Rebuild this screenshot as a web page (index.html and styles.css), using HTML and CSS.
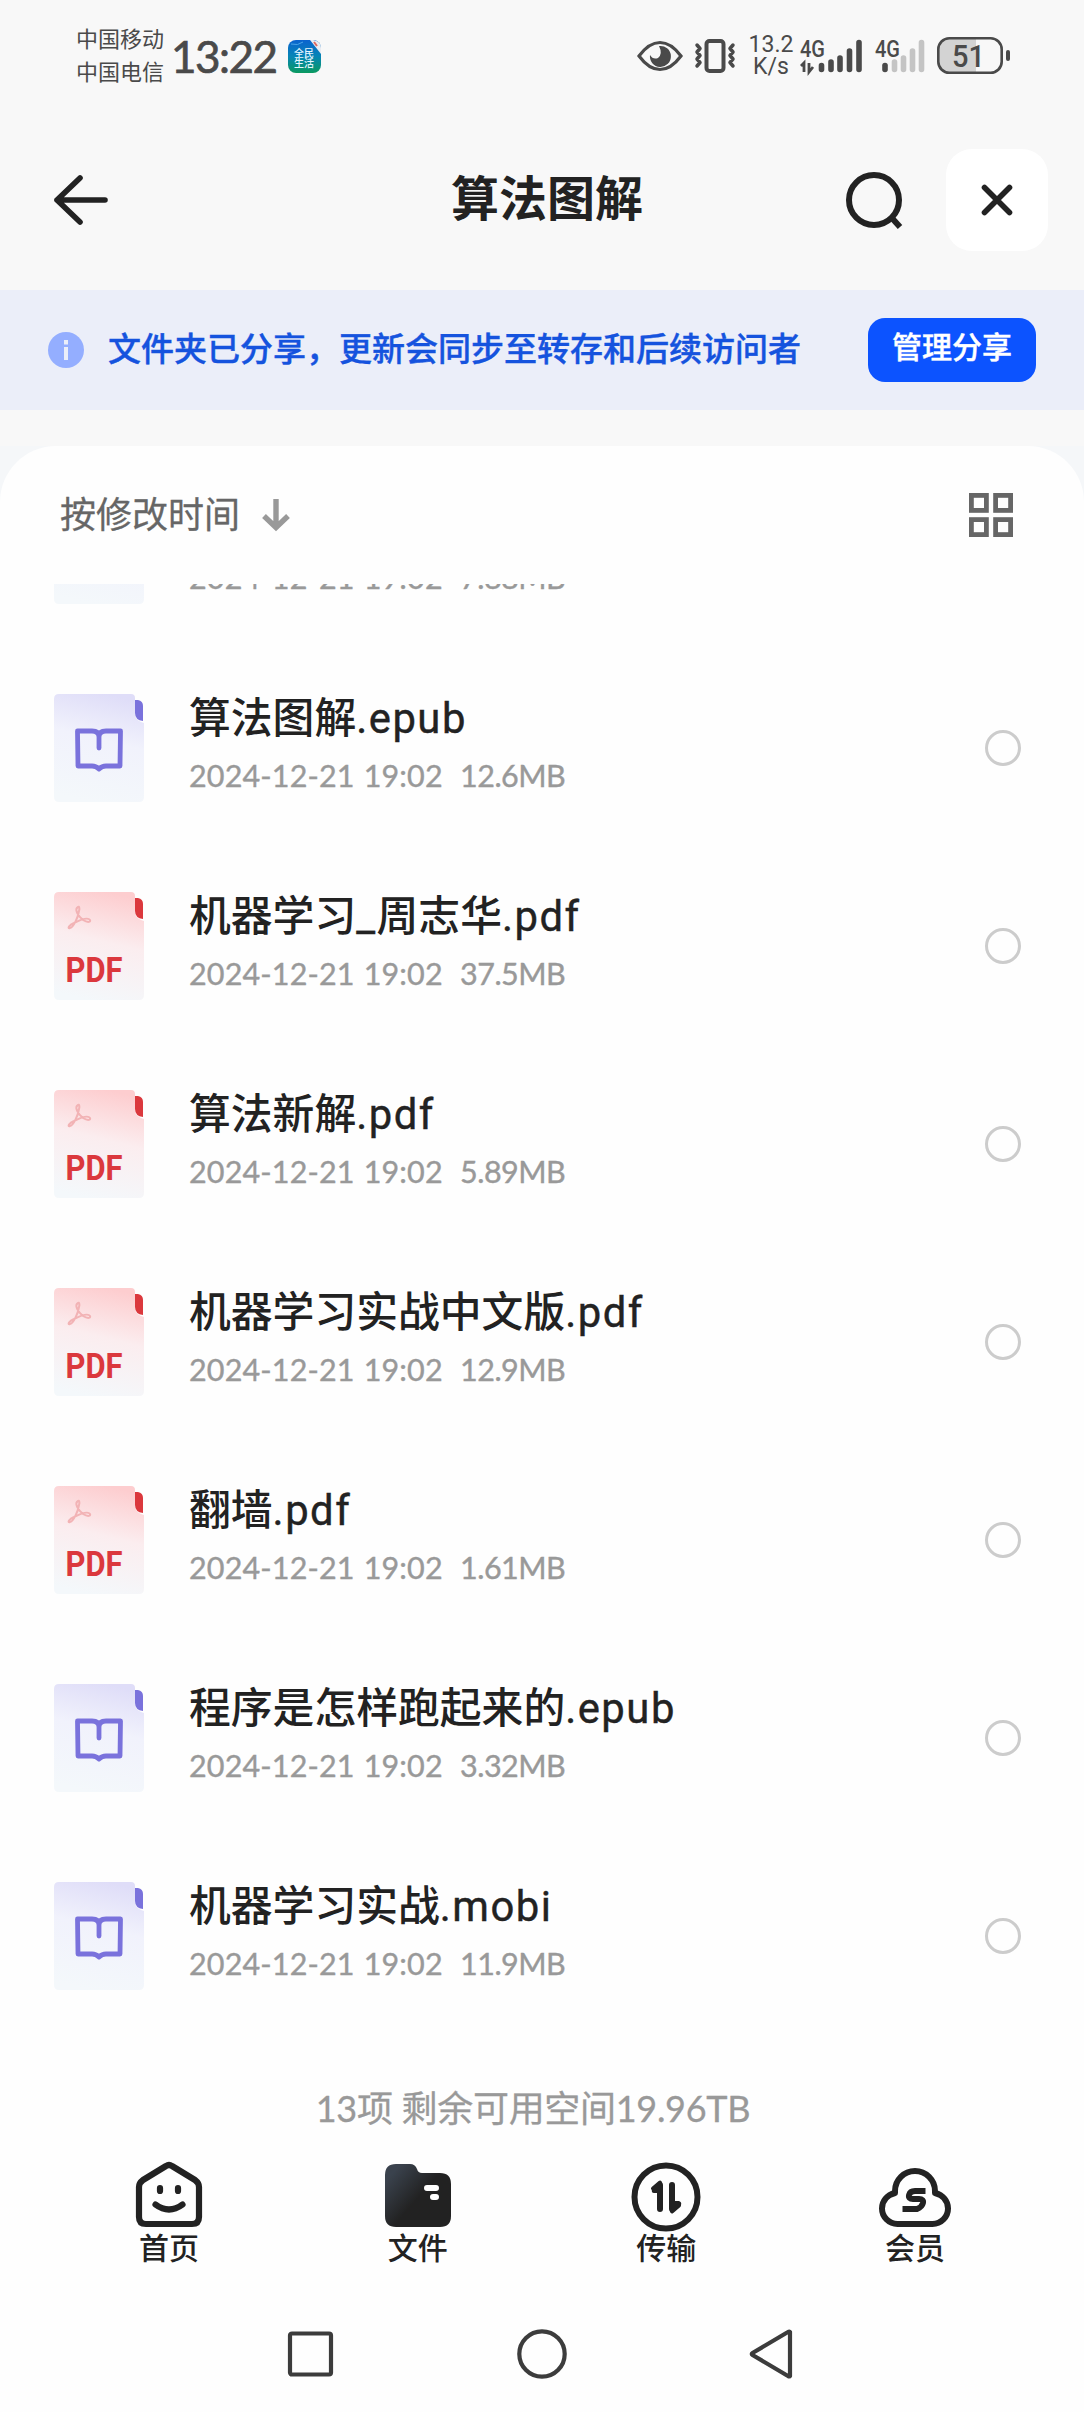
FILE: index.html
```
<!DOCTYPE html>
<html lang="zh-CN">
<head>
<meta charset="utf-8">
<title>算法图解</title>
<link rel="stylesheet" href="styles.css">
</head>
<body>
<svg class="defs" width="0" height="0">
  <defs>
    <linearGradient id="lilac" x1="0.6" y1="0" x2="0.4" y2="1"><stop offset="0" stop-color="#dfddf8"/><stop offset="0.42" stop-color="#f1f2fc"/><stop offset="1" stop-color="#f4f8fb"/></linearGradient>
    <linearGradient id="rose" x1="0.6" y1="0" x2="0.4" y2="1"><stop offset="0" stop-color="#fdcdcf"/><stop offset="0.45" stop-color="#fbedef"/><stop offset="1" stop-color="#f4f8fb"/></linearGradient>
    <linearGradient id="ink" x1="0" y1="0.1" x2="0.6" y2="0.6"><stop offset="0.15" stop-color="#3a424d"/><stop offset="0.85" stop-color="#222"/></linearGradient>
    <linearGradient id="app" x1="0" y1="0" x2="0" y2="1"><stop offset="0" stop-color="#0a63cf"/><stop offset="0.5" stop-color="#0785b5"/><stop offset="1" stop-color="#0b9a60"/></linearGradient>
    <symbol id="epub" viewBox="0 0 90 108">
      <path d="M5 0h72q4 0 4 4v17q1 6 9 8v74q0 5-5 5H5q-5 0-5-5V5q0-5 5-5z" fill="url(#lilac)"/>
      <path d="M81 6h3q5 1 5 6v15q-8-1-8-8z" fill="#7a72dc"/>
      <path d="M45 54V43q0-6-7-6H23.500l.5 35h14q4 0 7 3 3-3 7-3h14l.5-35H52q-7 0-7 6z" fill="none" stroke="#7a72dc" stroke-width="4.800" stroke-linejoin="round"/>
    </symbol>
    <symbol id="pdf" viewBox="0 0 90 108">
      <path d="M5 0h72q4 0 4 4v17q1 6 9 8v74q0 5-5 5H5q-5 0-5-5V5q0-5 5-5z" fill="url(#rose)"/>
      <path d="M81 6h3q5 1 5 6v15q-8-1-8-8z" fill="#db383d"/>
      <path d="M24 15c-4 2 0 9 5 13 5 3 8 2 7 0-2-3-10 0-16 3-5 2-7 6-4 5 3 0 8-10 9-17 1-3 0-5-1-4z" fill="none" stroke="#f2b3b5" stroke-width="2"/>
      <text x="11.500" y="90" class="pdf-word" textLength="57" lengthAdjust="spacingAndGlyphs">PDF</text>
    </symbol>
  </defs>
</svg>

<header class="status">
  <div class="carriers"><span>中国移动</span><span>中国电信</span></div>
  <div class="clock">13:22</div>
  <svg class="app-icon" width="33" height="33" viewBox="0 0 33 33"><rect width="33" height="33" rx="8" fill="url(#app)"/><path d="M22 0h3q8 1 8 8v6z" fill="#e9edf3"/><path d="M26 2l3 4" stroke="#dd6a62" stroke-width="2"/><path d="M3 4q7 2 12-2" stroke="#4aa5e8" fill="none"/><text x="6" y="17" class="app-word">全民</text><text x="6" y="27" class="app-word">生活</text></svg>
  <div class="indicators">
    <svg class="eye" width="46" height="32" viewBox="0 0 46 32"><path d="M2 16Q12 2.500 23 2.500T44 16Q34 29.500 23 29.500T2 16z" fill="none" stroke="#4a4a4a" stroke-width="3.200"/><path d="M22 6a10.500 10.500 0 1 1-9 9q3 5 8 3 5-4 1-12z" fill="#4a4a4a"/></svg>
    <svg class="vibrate" width="42" height="34" viewBox="0 0 42 34" fill="none" stroke="#4a4a4a"><rect x="12.500" y="2" width="17" height="30" rx="3" stroke-width="4"/><path d="M3 6l3 3.500L3 13l3 3.500L3 20l3 3.500L3 27M39 6l-3 3.500 3 3.500-3 3.500 3 3.500-3 3.500 3 3.500" stroke-width="3.500" stroke-linecap="round" stroke-linejoin="round"/></svg>
    <div class="speed"><span>13.2</span><span>K/s</span></div>
    <svg class="sig" width="64" height="36" viewBox="0 0 64 36"><text x="1" y="19" class="g4" textLength="25" lengthAdjust="spacingAndGlyphs">4G</text><path d="M2 28l3-3v9M10 25v9l4-5" fill="none" stroke="#4a4a4a" stroke-width="2.800"/><path d="M22.500 27.500v4M32 24v7.500M41 20v11.500M50.500 13v18.500M60 4.500v27" stroke="#4a4a4a" stroke-width="5.600" stroke-linecap="round"/></svg>
    <svg class="sig second" width="52" height="36" viewBox="0 0 52 36"><text x="1" y="19" class="g4" textLength="25" lengthAdjust="spacingAndGlyphs">4G</text><path d="M11 27.500v4" stroke="#4a4a4a" stroke-width="5.600" stroke-linecap="round"/><path d="M20.500 24v7.500M29.500 20v11.500M38.500 13v18.500M47.500 4.500v27" stroke="#c4c4c4" stroke-width="5.600" stroke-linecap="round"/></svg>
    <svg class="battery" width="74" height="38" viewBox="0 0 74 38"><path d="M39 2H12Q2 2 2 12v14q0 10 10 10h27z" fill="#d3d3d3"/><rect x="1.300" y="1.300" width="63.400" height="34.400" rx="11" fill="none" stroke="#4a4a4a" stroke-width="2.600"/><rect x="69" y="13" width="4" height="11" rx="2" fill="#4a4a4a"/><text x="15" y="30" class="batt-word" textLength="33" lengthAdjust="spacingAndGlyphs">51</text></svg>
  </div>
</header>

<nav class="titlebar">
  <svg width="54" height="50" viewBox="0 0 54 50" fill="none" stroke="#222" stroke-width="5.600" stroke-linecap="round" stroke-linejoin="round"><path d="M3 25h48M26 3L3 25l23 22"/></svg>
  <h1>算法图解</h1>
  <svg class="search" width="60" height="60" viewBox="0 0 60 60" fill="none" stroke="#222"><circle cx="29" cy="30" r="25" stroke-width="6"/><path d="M46 47l9 10" stroke-width="6"/></svg>
  <button class="close"><svg width="32" height="32" viewBox="0 0 32 32" stroke="#222" stroke-width="5.600" stroke-linecap="round"><path d="M3.500 3.500l25 25M28.500 3.500l-25 25"/></svg></button>
</nav>

<section class="banner">
  <svg width="36" height="36" viewBox="0 0 36 36"><circle cx="18" cy="18" r="18" fill="#94aeff"/><path d="M18 8v4.500M18 15v13" stroke="#ebeef9" stroke-width="4"/></svg>
  <p>文件夹已分享，更新会同步至转存和后续访问者</p>
  <button>管理分享</button>
</section>

<main class="sheet-back">
<div class="sheet">
  <div class="sort">
    <span>按修改时间</span>
    <svg width="30" height="34" viewBox="0 0 30 34" fill="none" stroke="#999" stroke-width="5.400"><path d="M15 1v28M3 18l12 11.500L27 18"/></svg>
    <svg class="grid" width="44" height="44" viewBox="0 0 44 44" fill="none" stroke="#666" stroke-width="4.800"><rect x="2.400" y="2.400" width="15" height="15"/><rect x="26.600" y="2.400" width="15" height="15"/><rect x="2.400" y="26.600" width="15" height="15"/><rect x="26.600" y="26.600" width="15" height="15"/></svg>
  </div>
  <ul class="files">
    <li><svg class="ficon"><use href="#epub"/></svg><div class="info"><b>&nbsp;</b><small><span>2024-12-21 19:02</span><span>7.88MB</span></small></div><i></i></li>
    <li><svg class="ficon"><use href="#epub"/></svg><div class="info"><b>算法图解<span>.epub</span></b><small><span>2024-12-21 19:02</span><span>12.6MB</span></small></div><i></i></li>
    <li><svg class="ficon"><use href="#pdf"/></svg><div class="info"><b>机器学习<span>_</span>周志华<span>.pdf</span></b><small><span>2024-12-21 19:02</span><span>37.5MB</span></small></div><i></i></li>
    <li><svg class="ficon"><use href="#pdf"/></svg><div class="info"><b>算法新解<span>.pdf</span></b><small><span>2024-12-21 19:02</span><span>5.89MB</span></small></div><i></i></li>
    <li><svg class="ficon"><use href="#pdf"/></svg><div class="info"><b>机器学习实战中文版<span>.pdf</span></b><small><span>2024-12-21 19:02</span><span>12.9MB</span></small></div><i></i></li>
    <li><svg class="ficon"><use href="#pdf"/></svg><div class="info"><b>翻墙<span>.pdf</span></b><small><span>2024-12-21 19:02</span><span>1.61MB</span></small></div><i></i></li>
    <li><svg class="ficon"><use href="#epub"/></svg><div class="info"><b>程序是怎样跑起来的<span>.epub</span></b><small><span>2024-12-21 19:02</span><span>3.32MB</span></small></div><i></i></li>
    <li><svg class="ficon"><use href="#epub"/></svg><div class="info"><b>机器学习实战<span>.mobi</span></b><small><span>2024-12-21 19:02</span><span>11.9MB</span></small></div><i></i></li>
  </ul>
  <p class="summary">13项 剩余可用空间19.96TB</p>
</div>
</main>

<nav class="tabs">
  <a><svg width="76" height="72" viewBox="0 0 76 72" fill="none" stroke="#222" stroke-width="6.200" stroke-linecap="round" stroke-linejoin="round"><path d="M35 6Q38 4 41 6L64 20q4 3 4 7v30q0 7-7 7H15q-7 0-7-7V27q0-4 4-7z"/><path d="M29 28v3M47 28v3"/><path d="M24.500 44.500q13.500 10 27 0" /></svg><span>首页</span></a>
  <a><svg width="76" height="72" viewBox="0 0 76 72"><path d="M16 4h14q5 0 7 5 1 4 5 4h18q11 0 11 11v32q0 11-11 11H16Q5 67 5 56V15Q5 4 16 4z" fill="url(#ink)"/><path d="M47 28h9M53 37h3" stroke="#fff" stroke-width="6" stroke-linecap="round"/></svg><span>文件</span></a>
  <a><svg width="76" height="72" viewBox="0 0 76 72"><circle cx="38" cy="37" r="31.500" fill="none" stroke="#222" stroke-width="6"/><path d="M32 25v24M44 25v24" stroke="#222" stroke-width="6" stroke-linecap="round"/><path d="M32 22.500l-7 6M44 51.500l7-6" stroke="#222" stroke-width="4" stroke-linecap="round"/><path d="M24 29l8-6v10h-6q-3 0-2-4zM53 45l-9 6V41h7q3 1 2 4z" fill="#222"/></svg><span>传输</span></a>
  <a><svg width="76" height="72" viewBox="0 0 76 72" fill="none" stroke="#222"><path d="M18 33V31a20 20 0 0 1 40 0v2C66 35 71 41 71 48.500 71 57 64 64 55.500 64h-35C12 64 5 57 5 48.500 5 41 10 35 18 33z" stroke-width="6" stroke-linejoin="round"/><path d="M48.500 31H38q-5 0-6 4t4 4h6q5 0 4 4t-6 6H25.500" stroke-width="5.800"/></svg><span>会员</span></a>
</nav>

<footer class="sysnav">
  <svg width="50" height="50" viewBox="0 0 50 50" fill="none" stroke="#3c3c3c" stroke-width="4.200"><rect x="5" y="4.500" width="41" height="41" rx="2"/></svg>
  <svg width="50" height="50" viewBox="0 0 50 50" fill="none" stroke="#3c3c3c" stroke-width="4.200"><circle cx="25" cy="25" r="22.700"/></svg>
  <svg width="50" height="50" viewBox="0 0 50 50" fill="none" stroke="#3c3c3c" stroke-width="4.200" stroke-linejoin="round"><path d="M41 3v44q-.5 1-2 0L3.500 26q-1.500-1 0-2L39 3q1.500-1 2 0z"/></svg>
</footer>
</body>
</html>
```
FILE: styles.css
```
* { box-sizing: border-box; }
body {
  margin: 0; width: 1084px; height: 2412px; overflow: hidden;
  background: #fefefe; color: #222;
  font-family: Roboto, "Noto Sans CJK SC", sans-serif;
  display: flex; flex-direction: column;
}
.defs { position: absolute; }
svg { display: block; flex: none; overflow: visible; }
h1, p, ul, button { margin: 0; padding: 0; border: 0; }

.status {
  height: 120px; flex: none; background: #f8f8f8; color: #4a4a4a;
  display: flex; align-items: center; padding: 0 73px 8px 76px;
}
.carriers { font-size: 22px; line-height: 33px; display: flex; flex-direction: column; width: 95px; }
.clock { font: 44px/50px Lato, sans-serif; -webkit-text-stroke: .7px #4a4a4a; letter-spacing: -1.500px; width: 117px; }
.app-word { font: 500 10px "Noto Sans CJK SC", sans-serif; fill: #e6f6ff; }
.indicators { margin-left: auto; display: flex; align-items: center; }
.vibrate { margin-left: 11px; }
.speed { width: 54px; margin: 0 1px 0 8px; font-size: 23px; line-height: 22px; display: flex; flex-direction: column; align-items: center; }
.second { margin-left: 11px; }
.battery { margin-left: 11px; }
.g4 { font: 500 23px Roboto, sans-serif; fill: #4a4a4a; }
.batt-word { font: 500 32px Roboto, sans-serif; fill: #4a4a4a; }

.titlebar {
  height: 170px; flex: none; background: #f8f8f8;
  display: flex; align-items: center; padding: 0 36px 10px 54px;
}
.titlebar h1 { font-size: 48px; line-height: 60px; font-weight: 700; margin: 0 auto 0 343px; }
.search { margin-right: 41px; }
.close { width: 102px; height: 102px; border-radius: 26px; background: #fff; display: flex; align-items: center; justify-content: center; }

.banner {
  height: 120px; flex: none; background: #ebeef9;
  display: flex; align-items: center; padding: 0 48px;
}
.banner p { margin-left: 24px; padding-bottom: 6px; font-size: 33px; font-weight: 500; -webkit-text-stroke: .4px #1553de; color: #1553de; white-space: nowrap; }
.banner button {
  margin-left: auto; width: 168px; height: 64px; border-radius: 17px; background: #0c53ff; color: #fff;
  font: 500 30px/54px "Noto Sans CJK SC", sans-serif; -webkit-text-stroke: .4px #fff; padding-bottom: 10px;
}

.sheet-back { height: 1700px; flex: none; background: linear-gradient(#f8f8f8 36px, #f5f7f9 36px, #f5f7f9 120px, #fefefe 120px); padding-top: 36px; }
.sheet { height: 1664px; background: #fefefe; border-radius: 56px 56px 0 0; }
.sort { height: 138px; display: flex; align-items: center; padding: 0 71px 0 60px; font-size: 36px; color: #666; }
.sort span { margin-right: 21px; padding-bottom: 7px; -webkit-text-stroke: .3px #666; }
.sort .grid { margin-left: auto; }
.files { list-style: none; height: 1466px; padding-bottom: 15px; overflow: hidden; display: flex; flex-direction: column; justify-content: flex-end; }
.files li { height: 198px; flex: none; display: flex; align-items: center; padding: 0 63px 0 54px; }
.ficon { width: 90px; height: 108px; }
.pdf-word { font: 700 35px Roboto, sans-serif; fill: #db383d; }
.info { margin-left: 45px; display: flex; flex-direction: column; }
.info b { font-weight: 500; font-size: 41.800px; line-height: 58px; }
.info b span { letter-spacing: 1.500px; font-weight: 400; -webkit-text-stroke: .4px #222; }
.info small { font: 30.500px/54px Lato, sans-serif; -webkit-text-stroke: .4px #999; color: #999; display: flex; padding-bottom: 4px; }
.info small span:first-child { width: 271px; letter-spacing: .15px; word-spacing: 1px; }
.info small span + span { letter-spacing: -.5px; }
.files i { width: 36px; height: 36px; border: 3.500px solid #ccc; border-radius: 50%; margin-left: auto; }
.summary { font: 36px/56px Lato, "Noto Sans CJK SC", sans-serif; color: #999; text-align: center; padding: 30px 18px 0 0; letter-spacing: -.3px; -webkit-text-stroke: .3px #999; }

.tabs { height: 150px; flex: none; display: flex; justify-content: space-between; padding: 50px 131px 0; }
.tabs a { width: 76px; display: flex; flex-direction: column; align-items: center; font-size: 30px; line-height: 36px; font-weight: 500; }
.tabs span { margin-top: -1px; }
.sysnav { height: 152px; display: flex; justify-content: center; gap: 182px; padding-top: 69px; }
```
